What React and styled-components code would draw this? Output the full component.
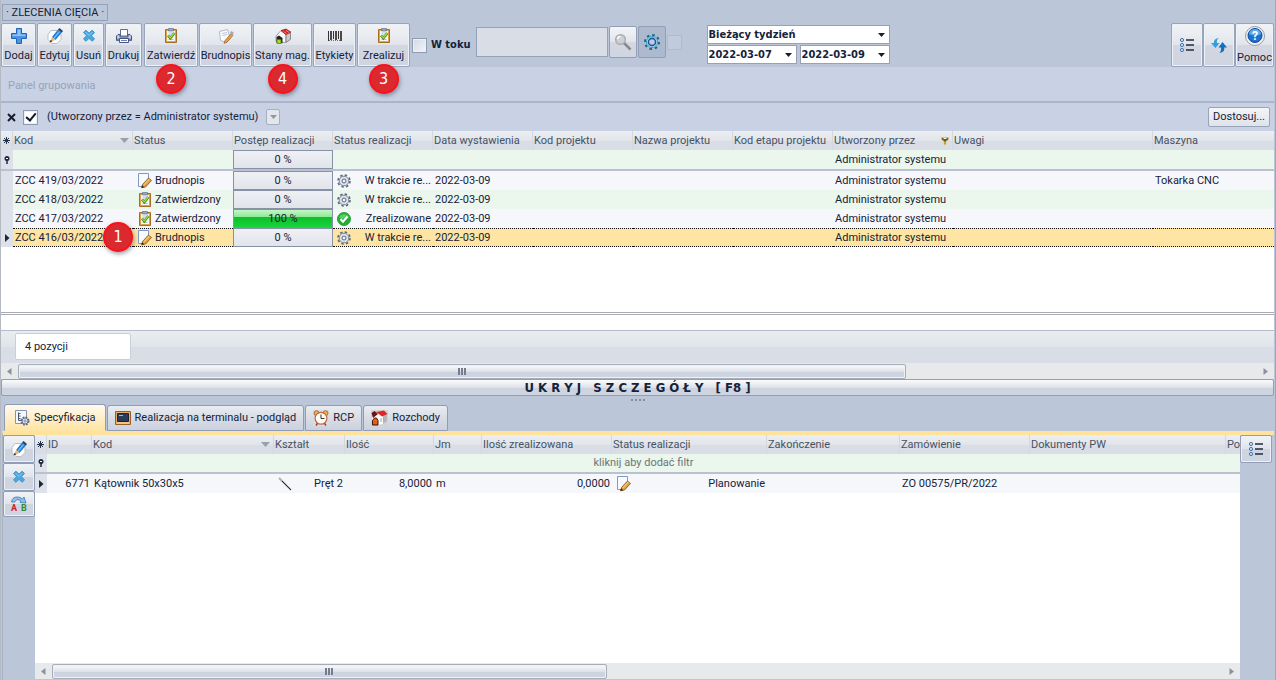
import React from 'react';
import styled, { createGlobalStyle } from 'styled-components';

const mainButtons = [
    {label: "Dodaj", icon: PlusIcon, size: 35},
    {label: "Edytuj", icon: EditIcon, size: 35},
    {label: "Usuń", icon: CrossIcon, size: 31},
    {label: "Drukuj", icon: PrinterIcon, size: 37},
    {label: "Zatwierdź", icon: ClipboardIcon, size: 54, step: 2, group: true},
    {label: "Brudnopis", icon: DraftIcon, size: 53},
    {label: "Stany mag.", icon: StockIcon, size: 59, step: 4},
    {label: "Etykiety", icon: BarcodeIcon, size: 43},
    {label: "Zrealizuj", icon: ClipboardIcon, size: 53, step: 3},
]

const orderColumns = [
    {title: "Kod", width: 120, sorted: true},
    {title: "Status", width: 100},
    {title: "Postęp realizacji", width: 100},
    {title: "Status realizacji", width: 100},
    {title: "Data wystawienia", width: 100},
    {title: "Kod projektu", width: 100},
    {title: "Nazwa projektu", width: 100},
    {title: "Kod etapu projektu", width: 100},
    {title: "Utworzony przez", width: 120, filtered: true},
    {title: "Uwagi", width: 200},
    {title: "Maszyna"},
]

const orders = [
    {code: "ZCC 419/03/2022", status: "Brudnopis", progress: 0, state: "W trakcie re...", date: "2022-03-09", author: "Administrator systemu", machine: "Tokarka CNC"},
    {code: "ZCC 418/03/2022", status: "Zatwierdzony", progress: 0, state: "W trakcie re...", date: "2022-03-09", author: "Administrator systemu"},
    {code: "ZCC 417/03/2022", status: "Zatwierdzony", progress: 100, state: "Zrealizowane", date: "2022-03-09", author: "Administrator systemu"},
    {code: "ZCC 416/03/2022", status: "Brudnopis", progress: 0, state: "W trakcie re...", date: "2022-03-09", author: "Administrator systemu", selected: true, step: 1},
]

const specColumns = [
    {title: "ID", width: 45},
    {title: "Kod", width: 182, sorted: true},
    {title: "Kształt", width: 71},
    {title: "Ilość", width: 89},
    {title: "Jm", width: 48},
    {title: "Ilość zrealizowana", width: 130},
    {title: "Status realizacji", width: 155},
    {title: "Zakończenie", width: 133},
    {title: "Zamówienie", width: 130},
    {title: "Dokumenty PW", width: 196},
    {title: "Po"},
]

const tabs = [
    {label: "Specyfikacja", icon: SpecIcon},
    {label: "Realizacja na terminalu - podgląd", icon: TerminalIcon},
    {label: "RCP", icon: ClockIcon},
    {label: "Rozchody", icon: OutgoIcon},
]

export default function App(){
    const [tab, setTab] = React.useState("Specyfikacja");
    const [showDetails, setShowDetails] = React.useState(true);

    return(
        <Window>
            <GlobalStyle/>
            <TitleRow><Title>· ZLECENIA CIĘCIA ·</Title></TitleRow>
            <Toolbar/>
            <GroupPanel>Panel grupowania</GroupPanel>
            <FilterPanel>
                <PlainButton aria-label="Usuń filtr"><RemoveIcon/></PlainButton>
                <FilterCheck type="checkbox" id="filter" defaultChecked/>
                <label htmlFor="filter">(Utworzony przez = Administrator systemu)</label>
                <RecentButton aria-label="Ostatnie filtry"><ArrowDown color="#8f98a8"/></RecentButton>
                <CustomizeButton>Dostosuj...</CustomizeButton>
            </FilterPanel>
            <Orders/>
            <Preview/>
            <Footer><Counter>4 pozycji</Counter></Footer>
            <ScrollBar visible={67} hidden={27}/>
            <DetailsButton onClick={() => setShowDetails(!showDetails)}>
                {"U K R Y J   S Z C Z E G Ó Ł Y   [ F8 ]"}
            </DetailsButton>
            <Splitter><i/><i/><i/><i/></Splitter>
            {showDetails && <>
                <Tabs role="tablist">
                    {tabs.map(each => <Tab key={each.label} role="tab" aria-selected={tab === each.label} $active={tab === each.label} onClick={() => setTab(each.label)}>
                        <each.icon/>{each.label}
                    </Tab>)}
                </Tabs>
                <Details>
                    <SideBar>
                        <SideButton aria-label="Edytuj"><EditIcon/></SideButton>
                        <SideButton aria-label="Usuń"><CrossIcon/></SideButton>
                        <SideButton aria-label="Zamień" $short><SwapIcon/></SideButton>
                    </SideBar>
                    <SpecHolder>
                        <Specification/>
                        <ScrollBar visible={8} hidden={9}/>
                    </SpecHolder>
                    <SideBar>
                        <SideButton aria-label="Kolumny"><ListIcon/></SideButton>
                    </SideBar>
                </Details>
            </>}
        </Window>
    )
}

function Toolbar(){
    return(
        <ToolbarHolder>
            {mainButtons.map(each => <ToolButton key={each.label} $size={each.size} $group={each.group}>
                <each.icon/>
                {each.label}
                {each.step && <Step $place="button">{each.step}</Step>}
            </ToolButton>)}
            <ProgressLabel><Check type="checkbox"/>W toku</ProgressLabel>
            <Search>
                <SearchInput type="text" aria-label="Szukaj"/>
                <SquareButton aria-label="Szukaj"><SearchIcon/></SquareButton>
                <SquareButton aria-label="Opcje" $pressed><OptionsIcon/></SquareButton>
                <Check type="checkbox" aria-label="Szukaj automatycznie" disabled/>
            </Search>
            <Period>
                <Select wide label="Okres" value="Bieżący tydzień"/>
                <Select label="Od" value="2022-03-07"/>
                <Select label="Do" value="2022-03-09"/>
            </Period>
            <RightTools>
                <IconToolButton $size={32} aria-label="Kolumny"><ListIcon/></IconToolButton>
                <IconToolButton $size={32} aria-label="Odśwież"><RefreshIcon/></IconToolButton>
                <HelpButton $size={39}><HelpIcon/>Pomoc</HelpButton>
            </RightTools>
        </ToolbarHolder>
    )
}

function Select({label, value, wide}){
    return(
        <SelectHolder $wide={wide}>
            <select aria-label={label} defaultValue={value}><option>{value}</option></select>
            <ArrowDown color="#16202e"/>
        </SelectHolder>
    )
}

function TableHead({columns}){
    return(
        <thead>
            <tr>
                <HeadMark><AsteriskIcon/></HeadMark>
                {columns.map(each => <Head key={each.title} scope="col">
                    <HeadContent>
                        <span>{each.title}</span>
                        {each.sorted && <SortIcon/>}
                        {each.filtered && <FilterIcon/>}
                    </HeadContent>
                </Head>)}
            </tr>
        </thead>
    )
}

function Columns({columns}){
    return(
        <colgroup>
            <Col $size={12}/>
            {columns.map(each => <Col key={each.title} $size={each.width}/>)}
        </colgroup>
    )
}

function Orders(){
    return(
        <OrdersHolder>
            <Table>
                <Columns columns={orderColumns}/>
                <TableHead columns={orderColumns}/>
                <tbody>
                    <FilterRow>
                        <Mark><PinIcon/></Mark>
                        <Cell/><Cell/>
                        <ProgressCell><Progress>0 %</Progress></ProgressCell>
                        <Cell/><Cell/><Cell/><Cell/><Cell/>
                        <Cell>Administrator systemu</Cell>
                        <Cell/><Cell/>
                    </FilterRow>
                    {orders.map((each, i) => <Row key={each.code} $even={i % 2 === 1} $selected={each.selected}>
                        <Mark>{each.selected && <CurrentIcon/>}</Mark>
                        <Cell>
                            <Code>{each.code}{each.step && <Step $place="row">{each.step}</Step>}</Code>
                        </Cell>
                        <Cell>
                            <WithIcon>{each.status === "Brudnopis" ? <NoteIcon/> : <ClipboardIcon/>}{each.status}</WithIcon>
                        </Cell>
                        <ProgressCell>
                            <Progress>
                                <ProgressBar style={{width: `${each.progress}%`}}/>
                                <span>{each.progress} %</span>
                            </Progress>
                        </ProgressCell>
                        <Cell>
                            <Spread>{each.progress === 100 ? <DoneIcon/> : <GearIcon/>}{each.state}</Spread>
                        </Cell>
                        <Cell>{each.date}</Cell>
                        <Cell/><Cell/><Cell/>
                        <Cell>{each.author}</Cell>
                        <Cell/>
                        <Cell>{each.machine}</Cell>
                    </Row>)}
                </tbody>
            </Table>
        </OrdersHolder>
    )
}

function Specification(){
    return(
        <SpecBody>
            <Table>
                <Columns columns={specColumns}/>
                <TableHead columns={specColumns}/>
                <tbody>
                    <FilterRow $low>
                        <Mark><PinIcon/></Mark>
                        <Hint colSpan={11}>kliknij aby dodać filtr</Hint>
                    </FilterRow>
                    <Row>
                        <Mark><CurrentIcon/></Mark>
                        <Cell $right>6771</Cell>
                        <Cell>Kątownik 50x30x5</Cell>
                        <Cell><Spread><RodIcon/>Pręt 2</Spread></Cell>
                        <Cell $right>8,0000</Cell>
                        <Cell>m</Cell>
                        <Cell $right>0,0000</Cell>
                        <Cell><Spread><NoteIcon/>Planowanie</Spread></Cell>
                        <Cell/>
                        <Cell>ZO 00575/PR/2022</Cell>
                        <Cell/><Cell/>
                    </Row>
                </tbody>
            </Table>
        </SpecBody>
    )
}

function ScrollBar({visible, hidden}){
    return(
        <ScrollHolder>
            <ArrowLeft/>
            <Thumb $grow={visible}><i/><i/><i/></Thumb>
            <Rest $grow={hidden}/>
            <ArrowRight/>
        </ScrollHolder>
    )
}

/* icons */

function PlusIcon(){
    return(
        <svg width="18" height="18" viewBox="0 0 18 18">
            <path d="M6.500 1.500h5v5h5v5h-5v5h-5v-5h-5v-5h5z" fill="#4c93e2" stroke="#2361b4"/>
            <path d="M7.500 2.500h3v5h5v1.500h-13v-1.500h5z" fill="#8fc3f7"/>
        </svg>
    )
}

function EditIcon(){
    return(
        <svg width="18" height="18" viewBox="0 0 18 18">
            <path d="M5 3.500h6l4 4v5l-4 4H6l-4-4v-5z" fill="#fff" stroke="#b9bec7"/>
            <path d="M6 10L12 2.500l3.700 3.200L9.500 13z" fill="#1f7fd6"/>
            <path d="M7.300 11L13 4l1 1-5.700 7z" fill="#72bdf5"/>
            <path d="M12 2.500l1.500-1.500 3.500 3-1.300 1.700z" fill="#27415f"/>
            <path d="M6 10l3.500 3-5.500 2z" fill="#e8b878"/>
            <path d="M4.700 13l1.800 1.200L3.500 15.500z" fill="#222"/>
        </svg>
    )
}

function CrossIcon(){
    return(
        <svg width="16" height="16" viewBox="0 0 16 16">
            <path d="M2.500 4.500L5 2.200l3 3 3-3 2.500 2.300-3 3.200 3 3.300-2.500 2.300-3-3-3 3-2.500-2.300 3-3.300z" fill="#4aa6dc" stroke="#3c97cd"/>
            <path d="M4.500 4l3.500 3.500L11.500 4" fill="none" stroke="#8fd0f2"/>
        </svg>
    )
}

function PrinterIcon(){
    return(
        <svg width="18" height="16" viewBox="0 0 18 16">
            <path d="M5.500 1.500h7V8h-7z" fill="#fff" stroke="#5f6d92"/>
            <path d="M3 6.500h2V9h8V6.500h2l1.500 1.500v4.500h-15V8z" fill="#c3cbe2" stroke="#48557e"/>
            <path d="M2 10.500h14v2H2z" fill="#7482ac"/>
            <path d="M4.500 10.500h9v4h-9z" fill="#fff" stroke="#48557e"/>
            <path d="M6 12.500h6" stroke="#6d7fb4"/>
        </svg>
    )
}

function ClipboardIcon(){
    return(
        <svg width="16" height="16" viewBox="0 0 16 16">
            <path d="M2.500 1.500h11v13h-11z" fill="#e3a24a" stroke="#a86f22"/>
            <path d="M4 3h8v10H4z" fill="#f6f9ff"/>
            <path d="M5.500 .500h5v2.500h-5z" fill="#9aa6c0" stroke="#65728e" strokeWidth=".7"/>
            <path d="M5.500 5h5M5.500 7h5M5.500 11.500h5" stroke="#b4bfd4"/>
            <path d="M5 7.500l2.300 2.700 4.200-5.200" fill="none" stroke="#438f14" strokeWidth="2.600"/>
            <path d="M5.300 7.600l2 2.200 4-4.800" fill="none" stroke="#a3df42" strokeWidth="1.200"/>
        </svg>
    )
}

function DraftIcon(){
    return(
        <svg width="16" height="16" viewBox="0 0 16 16">
            <path d="M1.500 3.500l8-2 3 9-4 4-6-2z" fill="#fafcff" stroke="#b2bdd2"/>
            <path d="M4 5.500l5-1M4.500 7.500l5-1" stroke="#bac6da"/>
            <path d="M7 12.500l6-7 2 1.800-6 7-3 1z" fill="#e6a04a" stroke="#925f27" strokeWidth=".7"/>
            <path d="M12 4.500l1.500-1.500 2.500 2-1.500 1.500z" fill="#a0aaba"/>
        </svg>
    )
}

function NoteIcon(){
    return(
        <svg width="16" height="16" viewBox="0 0 16 16">
            <path d="M1.500.500h10v10l-3 3h-7z" fill="#f7faff" stroke="#8298c4"/>
            <path d="M5.500 11.500l6-6.500L14.500 7.500 8.500 14l-4 .8z" fill="#dfa244" stroke="#845115" strokeWidth=".8"/>
            <path d="M7 11.800l5.500-6" stroke="#ffdc8a"/>
            <path d="M4.500 14.800l.7-2.500 2 1.900z" fill="#332211"/>
        </svg>
    )
}

function StockIcon(){
    return(
        <svg width="18" height="16" viewBox="0 0 18 16">
            <path d="M2 8l5-5.500 5 4v7.500l-4 1-6-2z" fill="#f8f8f8" stroke="#888" strokeWidth=".8"/>
            <path d="M12 6.500l4.500-2v7l-4.500 3z" fill="#c9c9cd" stroke="#777" strokeWidth=".8"/>
            <path d="M7 2.500L12 1l4.800 3-5 2.600z" fill="#df1d20" stroke="#991c20" strokeWidth=".7"/>
            <path d="M9.500 3.500l3 2M12 2.500l3 2" stroke="#f58a8a"/>
            <path d="M2.500 9L5 7.500 8.500 10v5h-6z" fill="#222"/>
            <path d="M3 11.500h4v4H3z" fill="#a5df16" stroke="#4c7b0a" strokeWidth=".7"/>
        </svg>
    )
}

function OutgoIcon(){
    return(
        <svg width="17" height="16" viewBox="0 0 17 16">
            <path d="M0 0h17v16H0z" fill="#d3d3d6"/>
            <path d="M1 7l5-5 6 4v8l-6 1-5-2z" fill="#fbfbfb"/>
            <path d="M12 6l4-2v7l-4 3z" fill="#b5b5ba"/>
            <path d="M5 2L13 .500 16.500 4 11 6.500z" fill="#e02528"/>
            <path d="M.500 3l3-2L7 4 2 8z" fill="#6b1414"/>
            <path d="M1.500 10.500L3.500 8h2L7 10.500V15H1.500z" fill="#ef5b12" stroke="#34170b"/>
            <path d="M10 8v4M12.500 7v4" stroke="#aaa"/>
        </svg>
    )
}

function BarcodeIcon(){
    return(
        <svg width="16" height="16" viewBox="0 0 16 16">
            <path d="M1.500 3v10M6.500 3v8M11.500 3v8" stroke="#333"/>
            <path d="M4 3v9M9 3v9M14 3v10" stroke="#4a4a4a" strokeWidth="2"/>
            <path d="M2 12.500h12" stroke="#777" strokeDasharray="1 1"/>
        </svg>
    )
}

function SearchIcon(){
    return(
        <svg width="18" height="18" viewBox="0 0 18 18">
            <path d="M9.500 9.500l7 7" stroke="#85898f" strokeWidth="2.500"/>
            <circle cx="6.500" cy="6.500" r="4.800" fill="#cdd0d4" stroke="#a9adb2" strokeWidth="1.500"/>
            <path d="M3.500 6a3 3 0 0 1 3-2.500" fill="none" stroke="#fff" strokeWidth="1.500"/>
        </svg>
    )
}

function OptionsIcon(){
    return(
        <svg width="18" height="18" viewBox="0 0 18 18">
            <circle cx="9" cy="9" r="7" fill="none" stroke="#1d6480" strokeWidth="2" strokeDasharray="2.500 3"/>
            <circle cx="9" cy="9" r="5.500" fill="#d8ecf8" stroke="#2aa0c4"/>
            <circle cx="9" cy="9" r="3.600" fill="#bfcbe0" stroke="#1b56a0" strokeWidth="1.600"/>
        </svg>
    )
}

function ListIcon(){
    return(
        <svg width="16" height="16" viewBox="0 0 16 16">
            <path d="M7 3h8M7 8h8M7 13h8" stroke="#1e2b42" strokeWidth="1.300"/>
            <g fill="#cfe4f8" stroke="#4473ac">
                <circle cx="3" cy="3" r="1.600"/>
                <circle cx="3" cy="8" r="1.600"/>
                <circle cx="3" cy="13" r="1.600"/>
            </g>
        </svg>
    )
}

function RefreshIcon(){
    return(
        <svg width="18" height="18" viewBox="0 0 18 18">
            <path d="M8.500 2C5 2.500 3.800 4.500 4 7H1l4.500 5L9.500 7H7c-.5-2 0-3.500 1.500-5z" fill="#2f9fdd"/>
            <path d="M9.500 17c4-.5 5-2.500 4.800-5.500H17L12.500 6 8.500 11.500H11c.3 2.200 0 4-1.500 5.500z" fill="#176fb8"/>
        </svg>
    )
}

function HelpIcon(){
    return(
        <svg width="22" height="22" viewBox="0 0 22 22">
            <circle cx="11" cy="11" r="9.500" fill="#f0f0f2" stroke="#9b9da3"/>
            <circle cx="11" cy="10.500" r="7" fill="#1c72ce" stroke="#0d4c9c"/>
            <path d="M5 9a6 5 0 0 1 12 0q-6 3-12 0z" fill="#5ea9ec"/>
            <text x="11" y="15" textAnchor="middle" fontSize="12" fontWeight="bold" fill="#fff">?</text>
        </svg>
    )
}

function GearIcon(){
    return(
        <svg width="14" height="14" viewBox="0 0 14 14">
            <circle cx="7" cy="7" r="6" fill="none" stroke="#5c6780" strokeWidth="1.600" strokeDasharray="2.500 2.210"/>
            <circle cx="7" cy="7" r="4.800" fill="#dfe4ec" stroke="#7c879c"/>
            <circle cx="7" cy="7" r="2" fill="#f4f6f9" stroke="#59657e"/>
        </svg>
    )
}

function DoneIcon(){
    return(
        <svg width="14" height="14" viewBox="0 0 14 14">
            <circle cx="7" cy="7" r="6.500" fill="#20ad32" stroke="#2ba33a"/>
            <path d="M2 5.500a5.300 5 0 0 1 10 0q-5 2.500-10 0z" fill="#58cf5e"/>
            <path d="M3.500 7l2.500 2.700L10.500 4.500" fill="none" stroke="#fff" strokeWidth="2"/>
        </svg>
    )
}

function SpecIcon(){
    return(
        <svg width="16" height="16" viewBox="0 0 16 16">
            <path d="M1.500.500h11v13h-11z" fill="#f6f8fc" stroke="#8694b2"/>
            <path d="M4.500 2.500v8h6M4.500 3.500h2M4.500 6h2M4.500 8.500h2" fill="none" stroke="#495878"/>
            <circle cx="11" cy="11" r="3.800" fill="none" stroke="#5c6a89" strokeWidth="1.500" strokeDasharray="1.800 1.200"/>
            <circle cx="11" cy="11" r="3" fill="#dce3ef" stroke="#66748f"/>
            <circle cx="11" cy="11" r="1" fill="#fff" stroke="#59657e" strokeWidth=".7"/>
        </svg>
    )
}

function TerminalIcon(){
    return(
        <svg width="16" height="14" viewBox="0 0 16 14">
            <path d="M.500.500h15v13H.500z" fill="#e8ad5e" stroke="#9a5e24"/>
            <path d="M2.500 2.500h11v8h-11z" fill="#2b3b5c" stroke="#182238"/>
            <path d="M4 4.500h4" stroke="#9fb6dd"/>
            <path d="M2 12h12" stroke="#fae1b4"/>
        </svg>
    )
}

function ClockIcon(){
    return(
        <svg width="16" height="16" viewBox="0 0 16 16">
            <path d="M0 0h16v16H0z" fill="#dcdcde"/>
            <circle cx="3.500" cy="3.200" r="2.500" fill="#eeb04c" stroke="#a45b2c" strokeWidth=".8"/>
            <circle cx="12.500" cy="3.200" r="2.500" fill="#eeb04c" stroke="#a45b2c" strokeWidth=".8"/>
            <path d="M3 15.500l2-3M13 15.500l-2-3" stroke="#a23b28" strokeWidth="1.500"/>
            <circle cx="8" cy="8.300" r="5.900" fill="#fdfdf4" stroke="#c0674a" strokeWidth="1.200"/>
            <path d="M8 4.500v4h3.500" fill="none" stroke="#333"/>
        </svg>
    )
}

function SwapIcon(){
    return(
        <svg width="20" height="20" viewBox="0 0 20 20">
            <path d="M2.500 8C3 4 6 2 11 3.500L13.500 5l1.500-2 2 6-6-.500 1-1.500C9 5 6.500 5.500 6 8z" fill="#8ebfe8" stroke="#3d78b2" strokeWidth=".8"/>
            <text x="2" y="17" fontSize="9" fontWeight="bold" fill="#cf2020">A</text>
            <text x="12" y="17" fontSize="9" fontWeight="bold" fill="#2b8a2b">B</text>
        </svg>
    )
}

function RodIcon(){
    return(
        <svg width="14" height="14" viewBox="0 0 14 14">
            <path d="M1 1l12 12" stroke="#b0b0b0" strokeWidth="2"/>
            <path d="M4 4l9 9" stroke="#2b2b2b"/>
        </svg>
    )
}

function AsteriskIcon(){
    return <svg width="7" height="7" viewBox="0 0 7 7"><path d="M3.500 0v7M0 3.500h7M1 1l5 5M6 1L1 6" stroke="#26334a"/></svg>
}

function PinIcon(){
    return(
        <svg width="6" height="8" viewBox="0 0 6 8">
            <circle cx="3" cy="2.500" r="2.500" fill="#1d2a40"/>
            <path d="M2 2.500h2" stroke="#fff"/>
            <path d="M3 4v4" stroke="#1d2a40" strokeWidth="1.500"/>
        </svg>
    )
}

function FilterIcon(){
    return(
        <svg width="8" height="9" viewBox="0 0 8 9">
            <path d="M.500 1.500h7v2L4.800 5.500v3H3.200v-3L.500 3.500z" fill="#6d5514" stroke="#e5c85e" strokeWidth=".8"/>
            <path d="M2.500 2.500h3" stroke="#fff"/>
        </svg>
    )
}

function SortIcon(){
    return <svg width="9" height="5" viewBox="0 0 9 5"><path d="M0 0h9L4.500 5z" fill="#98a0ac"/></svg>
}

function CurrentIcon(){
    return <svg width="5" height="8" viewBox="0 0 5 8"><path d="M0 0l4.500 4L0 8z" fill="#1d2638"/></svg>
}

function RemoveIcon(){
    return <svg width="9" height="9" viewBox="0 0 9 9"><path d="M1 1l7 7M8 1L1 8" stroke="#141d2c" strokeWidth="2"/></svg>
}

function ArrowDown({color}){
    return <svg width="7" height="4" viewBox="0 0 7 4"><path d="M0 0h7L3.500 4z" fill={color}/></svg>
}

function ArrowLeft(){
    return <svg width="5" height="7" viewBox="0 0 5 7"><path d="M4.500 0v7L0 3.500z" fill="#8a92a2"/></svg>
}

function ArrowRight(){
    return <svg width="5" height="7" viewBox="0 0 5 7"><path d="M.500 0v7L5 3.500z" fill="#8a92a2"/></svg>
}

const boldFont = "'DejaVu Sans Condensed', 'DejaVu Sans', sans-serif";

const GlobalStyle = createGlobalStyle`
    *{
        box-sizing:border-box;
    }

    body{
        margin:0;
        background-color:#bbc7d9;
    }

    body, button, input, select{
        font-family:Roboto, 'DejaVu Sans Condensed', sans-serif;
        font-size:11px;
        line-height:16px;
        color:#15223a;
    }

    button{
        cursor:pointer;
    }

    svg{
        flex-shrink:0;
    }
`;

const Window = styled.div`
    display:flex;
    flex-direction:column;
    min-height:100vh;
    padding-right:1px;
    border-left:1px solid #b4b9c2;
    border-right:1px solid #98a7bf;
    overflow:hidden;
`;

const TitleRow = styled.div`
    display:flex;
    padding:4px 1px 2px;
`;

const Title = styled.h1`
    margin:0;
    padding:0 3px;
    border:1px solid #94a1b8;
    font-size:11px;
    font-weight:normal;
    line-height:15px;
`;

const ToolbarHolder = styled.div`
    display:flex;
    align-items:flex-start;
    gap:1px;
`;

const ToolButton = styled.button`
    position:relative;
    display:flex;
    flex-direction:column;
    align-items:center;
    gap:3px;
    flex-shrink:0;
    width:${props => props.$size}px;
    height:44px;
    margin-left:${props => props.$group? "1px":"0"};
    padding:3px 0 0;
    border:1px solid #98a4b9;
    border-radius:2px;
    background:linear-gradient(#f1f3f6, #e1e5eb 50%, #d2d7e2 51%, #ced4e0);
    box-shadow:inset 0 0 0 1px #eef1f5;
    white-space:nowrap;

    > svg{
        height:18px;
    }
`;

const IconToolButton = styled(ToolButton)`
    justify-content:center;
    padding:0;
`;

const HelpButton = styled(ToolButton)`
    padding-top:1px;

    > svg{
        height:22px;
    }
`;

const Step = styled.span`
    position:absolute;
    z-index:1;
    top:${props => props.$place === "row"? "-8px":"40px"};
    left:${props => props.$place === "row"? "88px":"calc(50% - 15px)"};
    display:flex;
    align-items:center;
    justify-content:center;
    width:30px;
    height:30px;
    border:2px solid #fb1117;
    border-radius:50%;
    background-color:#da2a2f;
    box-shadow:1px 2px 4px rgba(60, 60, 80, 0.5);
    color:#fff;
    font-family:${boldFont};
    font-size:16px;
`;

const Check = styled.input`
    appearance:none;
    flex-shrink:0;
    width:15px;
    height:15px;
    margin:0;
    border:1px solid #8e9bb1;
    background:linear-gradient(135deg, #d3d9e3, #f2f4f7);
    box-shadow:inset 0 0 0 1px #eceff4;

    &:disabled{
        border-color:#aebbd1;
        background:#c1cbde;
        box-shadow:none;
    }
`;

const ProgressLabel = styled.label`
    display:flex;
    align-items:center;
    gap:4px;
    height:44px;
    margin-left:1px;
    font-family:${boldFont};
    font-weight:bold;
    white-space:nowrap;
`;

const Search = styled.div`
    display:flex;
    align-items:center;
    gap:1px;
    height:38px;
    margin-left:4px;
`;

const SearchInput = styled.input`
    width:132px;
    height:30px;
    border:1px solid #95a2b6;
    background-color:#d9dde5;
`;

const SquareButton = styled.button`
    display:flex;
    align-items:center;
    justify-content:center;
    width:28px;
    height:32px;
    padding:0;
    border:1px solid #929eb4;
    border-radius:2px;
    background:${props => props.$pressed? "#acb9cf":"linear-gradient(#f3f5f7, #e1e5eb 50%, #d2d7e2 51%, #d0d6e1)"};
`;

const Period = styled.div`
    display:grid;
    grid-template-columns:90px 90px;
    gap:1px 3px;
    margin:2px 0 0 24px;
`;

const SelectHolder = styled.div`
    position:relative;
    grid-column:${props => props.$wide? "span 2":"auto"};

    select{
        appearance:none;
        display:block;
        width:100%;
        height:19px;
        padding:0 16px 0 1px;
        border:1px solid #95a2b6;
        border-radius:0;
        background-color:#fff;
        font-family:${boldFont};
        font-weight:bold;
    }

    svg{
        position:absolute;
        top:8px;
        right:5px;
        pointer-events:none;
    }
`;

const RightTools = styled.div`
    display:flex;
    margin-left:auto;
`;

const GroupPanel = styled.div`
    height:36px;
    padding:11px 7px;
    border-bottom:2px solid #aab5c9;
    background-color:#c9d2e4;
    color:#98a3b6;
`;

const FilterPanel = styled.div`
    display:flex;
    align-items:center;
    height:28px;
    padding:0 4px 0 6px;
    background-color:#c9d2e4;
`;

const PlainButton = styled.button`
    display:flex;
    padding:0;
    border:none;
    background:none;
`;

const FilterCheck = styled(Check)`
    position:relative;
    margin:0 9px 0 7px;
    background:#fff;

    &:checked::after{
        content:"";
        position:absolute;
        top:0;
        left:4px;
        width:4px;
        height:8px;
        border:solid #111a28;
        border-width:0 2px 2px 0;
        transform:rotate(40deg);
    }
`;

const RecentButton = styled.button`
    display:flex;
    align-items:center;
    justify-content:center;
    width:14px;
    height:16px;
    margin-left:8px;
    padding:0;
    border:1px solid #a5afbf;
    border-radius:2px;
    background-color:#e3e6eb;
`;

const CustomizeButton = styled.button`
    height:20px;
    width:62px;
    margin-left:auto;
    padding:0;
    border:1px solid #98a4b9;
    border-radius:2px;
    background:linear-gradient(#f3f5f7, #dfe3ea);
    white-space:nowrap;
`;

const OrdersHolder = styled.div`
    height:181px;
    background-color:#fff;
`;

const Table = styled.table`
    width:100%;
    table-layout:fixed;
    border-collapse:separate;
    border-spacing:0;
`;

const Col = styled.col`
    width:${props => props.$size? props.$size + "px":"auto"};
`;

const Head = styled.th`
    height:19px;
    padding:0 3px 0 1px;
    border-right:1px solid #d2d7e0;
    background:linear-gradient(#eceff2, #e1e5ea 50%, #d8dde6 51%, #d8dde6);
    color:#465264;
    font-weight:normal;
    text-align:left;
    white-space:nowrap;
    overflow:hidden;

    &:last-child{
        padding-right:0;
        border-right:none;
    }
`;

const HeadContent = styled.div`
    display:flex;
    align-items:center;
    justify-content:space-between;
`;

const HeadMark = styled(Head)`
    padding:0;
    line-height:0;
    text-align:center;
`;

const Mark = styled.td`
    padding:0;
    background-color:#dde1e9;
    line-height:0;
    text-align:center;
`;

const Cell = styled.td`
    height:19px;
    padding:0 2px;
    text-align:${props => props.$right? "right":"left"};
    white-space:nowrap;
`;

const FilterRow = styled.tr`
    background-color:#ebf6ec;

    td{
        height:${props => props.$low? "20px":"21px"};
        border-bottom:2px solid #bbc1d1;
    }
`;

const Hint = styled.td`
    padding:0;
    color:#6d7478;
    text-align:center;
`;

const Row = styled.tr`
    background-color:${props => props.$selected? "#ffe5a4": props.$even? "#ebf6ec":"#f5f7fa"};

    ${Cell}{
        border:dotted #111;
        border-width:${props => props.$selected? "1px 0":"0"};
    }
`;

const ProgressCell = styled.td`
    height:19px;
    padding:0;
`;

const Progress = styled.div`
    position:relative;
    height:19px;
    border:1px solid #8792a6;
    background:linear-gradient(#eef0f4, #e1e4ea);
    line-height:18px;
    text-align:center;

    span{
        position:relative;
    }
`;

const ProgressBar = styled.div`
    position:absolute;
    top:0;
    left:0;
    height:100%;
    background:linear-gradient(#c3f7c5, #8eea96 40%, #0fbe2b 41%, #16d43a);
`;

const Code = styled.div`
    position:relative;
`;

const WithIcon = styled.div`
    display:flex;
    align-items:center;
    gap:2px;
    height:17px;
    padding-left:2px;
`;

const Spread = styled.div`
    display:flex;
    align-items:center;
    justify-content:space-between;
    height:17px;
    padding-left:2px;
`;

const Preview = styled.div`
    height:18px;
    border-top:3px double #a9adb3;
    background-color:#fff;
`;

const Footer = styled.div`
    height:33px;
    padding:2px 14px;
    border-top:1px solid #b3bbcd;
    background:linear-gradient(#eaedf0, #e0e4e9 50%, #d9dde6 51%);
`;

const Counter = styled.div`
    display:flex;
    align-items:center;
    width:116px;
    height:27px;
    padding:0 9px;
    border:1px solid #c9cedb;
    border-radius:2px;
    background-color:#fff;
`;

const ScrollHolder = styled.div`
    display:flex;
    align-items:center;
    height:16px;
    padding:0 6px;
    background-color:#e7e9eb;
`;

const Thumb = styled.div`
    display:flex;
    flex:${props => props.$grow} 0 0;
    align-items:center;
    justify-content:center;
    gap:1px;
    height:15px;
    margin-left:6px;
    border:1px solid #a7aebb;
    border-radius:2px;
    background:linear-gradient(#fbfbfc, #dde1e8 50%, #ccd2de 51%, #d0d6e1);
    box-shadow:inset 0 0 0 1px #eef0f4;

    i{
        width:2px;
        height:7px;
        background-color:#747c8e;
    }
`;

const Rest = styled.div`
    flex:${props => props.$grow} 0 0;
`;

const DetailsButton = styled.button`
    height:17px;
    padding:0;
    border:1px solid #919eb6;
    border-radius:2px;
    background:linear-gradient(#fbfbfc, #dde1e8 50%, #ccd2de 51%, #d0d6e1);
    font-family:${boldFont};
    font-size:13px;
    font-weight:bold;
    line-height:15px;
    white-space:pre;
`;

const Splitter = styled.div`
    display:flex;
    align-items:center;
    justify-content:center;
    gap:2px;
    height:8px;

    i{
        width:2px;
        height:2px;
        background-color:#7f8eaa;
    }
`;

const Tabs = styled.div`
    display:flex;
    align-items:flex-end;
    gap:1px;
    padding-left:3px;
`;

const Tab = styled.button`
    display:flex;
    align-items:center;
    gap:4px;
    height:${props => props.$active? "27px":"26px"};
    padding:${props => props.$active? "0 9px":"0 7px"};
    border:1px solid #8f9cb4;
    border-bottom-color:${props => props.$active? "#ffe7a9":"#8f9cb4"};
    border-radius:3px 3px 0 0;
    background:${props => props.$active? "linear-gradient(#fffaf0, #ffe5a4)":"linear-gradient(#e9ecf1, #d8dde6 50%, #cbd1de)"};
    white-space:nowrap;
`;

const Details = styled.div`
    display:flex;
    flex:1;
    margin-left:1px;
    padding-right:2px;
    border-top:4px solid #ffe29c;
    border-left:1px solid #a6b3c9;
`;

const SideBar = styled.div`
    display:flex;
    flex-direction:column;
    flex-shrink:0;
    width:32px;
`;

const SideButton = styled.button`
    display:flex;
    align-items:center;
    justify-content:center;
    height:${props => props.$short? "26px":"28px"};
    padding:0;
    border:1px solid #919eb6;
    border-radius:2px;
    background:linear-gradient(#f1f3f6, #dfe3ea 50%, #cfd5e0 51%, #ced4e0);
    box-shadow:inset 0 0 0 1px #eef1f5;
`;

const SpecHolder = styled.div`
    display:flex;
    flex:1;
    flex-direction:column;
    min-width:0;
    padding-bottom:1px;
`;

const SpecBody = styled.div`
    flex:1;
    overflow:hidden;
    background-color:#fff;
`;
